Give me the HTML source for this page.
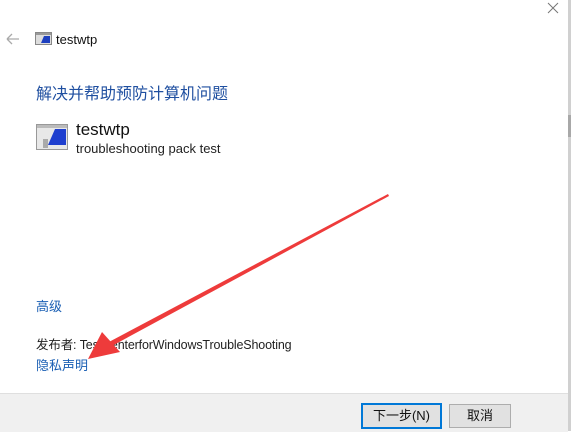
<!DOCTYPE html>
<html><head><meta charset="utf-8"><style>
body{margin:0;width:571px;height:431px;overflow:hidden;background:#fff;font-family:"Liberation Sans","Noto Sans CJK SC",sans-serif;position:relative}
.a{position:absolute;white-space:nowrap}
.blue{color:#1a5fb4}
</style></head><body>
<div class="a" style="left:568px;top:0;width:3px;height:431px;background:#d0d0d0"></div>
<div class="a" style="left:568px;top:115px;width:3px;height:22px;background:#a8a8a8"></div>
<svg class="a" style="left:546px;top:1px" width="14" height="14"><path d="M2 2L12 12M12 2L2 12" stroke="#777" stroke-width="1"/></svg>
<svg class="a" style="left:6px;top:33px" width="14" height="12"><path d="M1 6H13M1 6L6 1M1 6L6 11" stroke="#aaa" stroke-width="1.3" fill="none"/></svg>
<svg class="a" style="left:35px;top:32px" width="17" height="13"><rect x="0.5" y="0.5" width="16" height="12" fill="#ddd" stroke="#888"/><rect x="1" y="1" width="15" height="2" fill="#999"/><path d="M6 11L9 4H15V11Z" fill="#1d3fbf"/></svg>
<div class="a" style="left:56px;top:32px;font-size:13px;color:#111">testwtp</div>
<div class="a blue" style="left:36px;top:80px;font-size:16px;color:#1f4fa0">解决并帮助预防计算机问题</div>
<svg class="a" style="left:36px;top:123px" width="32" height="28"><rect x="0.5" y="1.5" width="31" height="25" fill="#e8e8e8" stroke="#999"/><rect x="1" y="2" width="30" height="3" fill="#bbb"/><path d="M12 22L19 6H30V22Z" fill="#1f3fcf"/><rect x="7" y="16" width="5" height="9" fill="#aaa"/></svg>
<div class="a" style="left:76px;top:120px;font-size:17px;color:#111">testwtp</div>
<div class="a" style="left:76px;top:141px;font-size:13px;color:#222">troubleshooting pack test</div>
<div class="a blue" style="left:36px;top:296px;font-size:13px">高级</div>
<div class="a" style="left:36px;top:334px;font-size:12.5px;color:#222;letter-spacing:-0.15px">发布者: TestCenterforWindowsTroubleShooting</div>
<div class="a blue" style="left:36px;top:355px;font-size:13px">隐私声明</div>
<div class="a" style="left:0;top:393px;width:568px;height:38px;background:#f0f0f0;border-top:1px solid #dfdfdf"></div>
<div class="a" style="left:361px;top:403px;width:77px;height:22px;background:#e1e1e1;border:2px solid #0078d7;font-size:13px;color:#111;text-align:center;line-height:22px">下一步(N)</div>
<div class="a" style="left:449px;top:404px;width:60px;height:22px;background:#e1e1e1;border:1px solid #adadad;font-size:13px;color:#111;text-align:center;line-height:22px">取消</div>
<svg class="a" style="left:0;top:0" width="571" height="431"><path d="M388 194L389 196L110 347L107 343Z" fill="#ee3b3b"/><path d="M88 359L102 332L120 352Z" fill="#ee3b3b"/></svg>
</body></html>
